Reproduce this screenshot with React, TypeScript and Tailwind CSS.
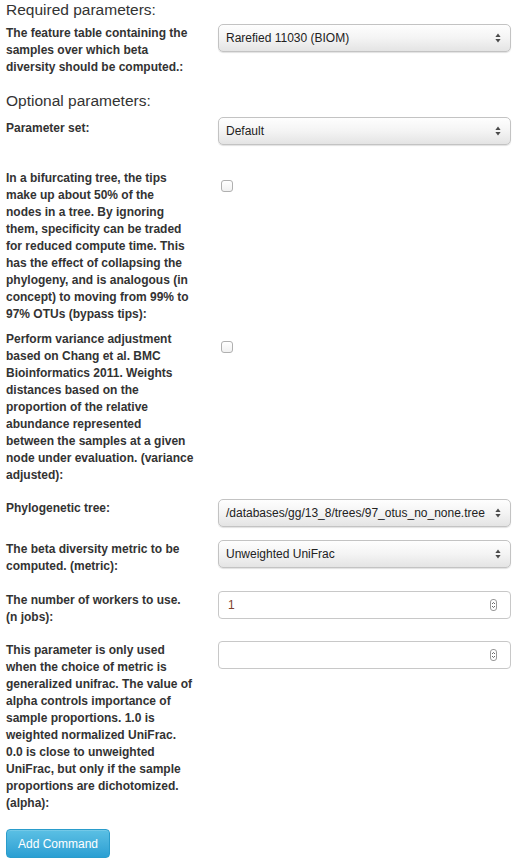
import React from "react";

function Arrows() {
  return (
    <svg width="6" height="10" viewBox="0 0 6 10" className="flex-none">
      <path d="M3 0.5 L5.6 4 L0.4 4 Z" fill="#4a4a4a" />
      <path d="M3 9.5 L5.6 6 L0.4 6 Z" fill="#4a4a4a" />
    </svg>
  );
}

function Select({ value }: { value: string }) {
  return (
    <div className="flex h-[28px] w-[293px] flex-none items-center justify-between rounded-[5px] border border-[#c3c3c3] bg-gradient-to-b from-[#fefefe] via-[#f4f4f4] to-[#e4e4e4] pl-[7px] pr-[9px] text-[12px] text-[#222] shadow-[0_1px_1px_rgba(0,0,0,0.12)]">
      <span className="whitespace-nowrap">{value}</span>
      <Arrows />
    </div>
  );
}

function Spinner() {
  return (
    <div className="flex h-[12px] w-[7px] flex-col items-center justify-center rounded-[3px] border border-[#9a9a9a] bg-white">
      <svg width="5" height="8" viewBox="0 0 5 8">
        <path d="M1 3 L2.5 1.5 L4 3" stroke="#555" strokeWidth="0.9" fill="none" />
        <path d="M1 5 L2.5 6.5 L4 5" stroke="#555" strokeWidth="0.9" fill="none" />
      </svg>
    </div>
  );
}

function NumberInput({ value }: { value?: string }) {
  return (
    <div className="flex h-[28px] w-[293px] flex-none items-center justify-between rounded-[4px] border border-[#c8c8c8] bg-white pl-[9px] pr-[13px] text-[12px] text-[#7d3f2c]">
      <span>{value ?? ""}</span>
      <Spinner />
    </div>
  );
}

function Checkbox() {
  return (
    <div className="mt-[11px] ml-[3px] h-[12px] w-[12px] rounded-[3px] border border-[#b0b0b0] bg-gradient-to-b from-white to-[#f1f1f1]" />
  );
}

function Label({ lines, className = "" }: { lines: string[]; className?: string }) {
  return (
    <div className={`w-[194px] flex-none pt-[1px] text-[12px] font-bold leading-[17px] text-[#333] ${className}`}>
      {lines.map((l, i) => (
        <div key={i} className="whitespace-nowrap">
          {l}
        </div>
      ))}
    </div>
  );
}

function Row({ children, className = "" }: { children: React.ReactNode; className?: string }) {
  return <div className={`flex items-start gap-[18px] ${className}`}>{children}</div>;
}

export default function App() {
  return (
    <div
      className="min-h-[866px] bg-white pl-[6px] text-[#333]"
      style={{ fontFamily: '"Liberation Sans", Arial, sans-serif' }}
    >
      <div className="text-[15.5px] leading-[20px]">Required parameters:</div>

      <Row className="mt-[4px]">
        <Label
          lines={[
            "The feature table containing the",
            "samples over which beta",
            "diversity should be computed.:",
          ]}
        />
        <Select value="Rarefied 11030 (BIOM)" />
      </Row>

      <div className="mt-[15px] text-[15.5px] leading-[20px]">Optional parameters:</div>

      <Row className="mt-[6px]">
        <Label className="pt-[3px]" lines={["Parameter set:"]} />
        <Select value="Default" />
      </Row>

      <Row className="mt-[24px]">
        <Label
          lines={[
            "In a bifurcating tree, the tips",
            "make up about 50% of the",
            "nodes in a tree. By ignoring",
            "them, specificity can be traded",
            "for reduced compute time. This",
            "has the effect of collapsing the",
            "phylogeny, and is analogous (in",
            "concept) to moving from 99% to",
            "97% OTUs (bypass tips):",
          ]}
        />
        <Checkbox />
      </Row>

      <Row className="mt-[7px]">
        <Label
          lines={[
            "Perform variance adjustment",
            "based on Chang et al. BMC",
            "Bioinformatics 2011. Weights",
            "distances based on the",
            "proportion of the relative",
            "abundance represented",
            "between the samples at a given",
            "node under evaluation. (variance",
            "adjusted):",
          ]}
        />
        <Checkbox />
      </Row>

      <Row className="mt-[15px]">
        <Label lines={["Phylogenetic tree:"]} />
        <Select value="/databases/gg/13_8/trees/97_otus_no_none.tree" />
      </Row>

      <Row className="mt-[13px]">
        <Label lines={["The beta diversity metric to be", "computed. (metric):"]} />
        <Select value="Unweighted UniFrac" />
      </Row>

      <Row className="mt-[16px]">
        <Label lines={["The number of workers to use.", "(n jobs):"]} />
        <NumberInput value="1" />
      </Row>

      <Row className="mt-[15px]">
        <Label
          lines={[
            "This parameter is only used",
            "when the choice of metric is",
            "generalized unifrac. The value of",
            "alpha controls importance of",
            "sample proportions. 1.0 is",
            "weighted normalized UniFrac.",
            "0.0 is close to unweighted",
            "UniFrac, but only if the sample",
            "proportions are dichotomized.",
            "(alpha):",
          ]}
        />
        <NumberInput />
      </Row>

      <button className="mt-[17px] flex h-[29px] w-[104px] items-center justify-center rounded-[4px] border border-[#2a9ccb] bg-gradient-to-b from-[#5bc0e4] to-[#2a9fd3] text-[12px] text-white shadow-[inset_0_1px_0_rgba(255,255,255,0.15)]">
        Add Command
      </button>
    </div>
  );
}
